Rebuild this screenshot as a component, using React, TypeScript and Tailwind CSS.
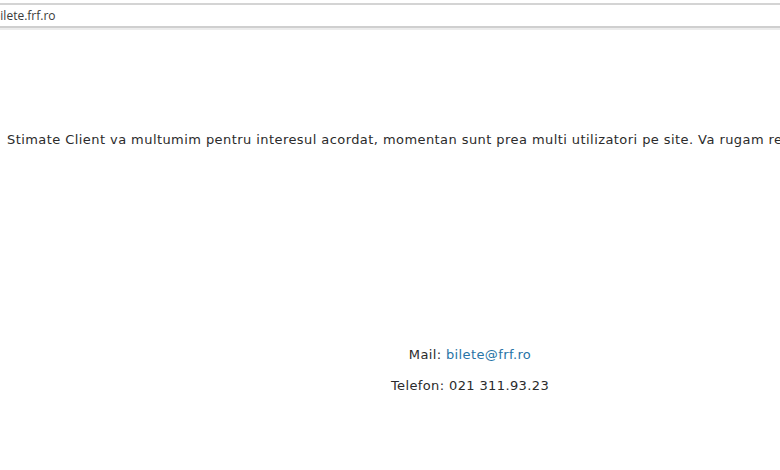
import React from 'react';

export default function App() {
  return (
    <div className="w-[780px] h-[470px] overflow-hidden bg-white relative">
      {/* address bar strip */}
      <div className="mt-[3px] h-[25px] border-t-2 border-b-2 border-t-[#d4d4d4] border-b-[#cfcfcf] bg-white flex items-center overflow-hidden">
        <span className="-ml-[7px] text-[12px] text-[#3a3a3a] font-['Open_Sans',sans-serif] whitespace-nowrap">
          bilete.frf.ro
        </span>
      </div>
      <div className="h-[2px] bg-[#ececec]" />

      <div className="w-[940px] font-['DejaVu_Sans',sans-serif] text-[#2b2b2b]">
        <p className="mt-[102px] pl-[7px] text-[13px] whitespace-nowrap leading-[15px] tracking-[0.43px]">
          Stimate Client va multumim pentru interesul acordat, momentan sunt prea multi utilizatori pe site. Va rugam reveniti mai tarziu.
        </p>

        <div className="mt-[200px] flex flex-col items-center gap-[16px] text-[13px] leading-[15px] tracking-[0.38px]">
          <p>
            Mail: <a className="text-[#2874a6]">bilete@frf.ro</a>
          </p>
          <p>Telefon: 021 311.93.23</p>
        </div>
      </div>
    </div>
  );
}
